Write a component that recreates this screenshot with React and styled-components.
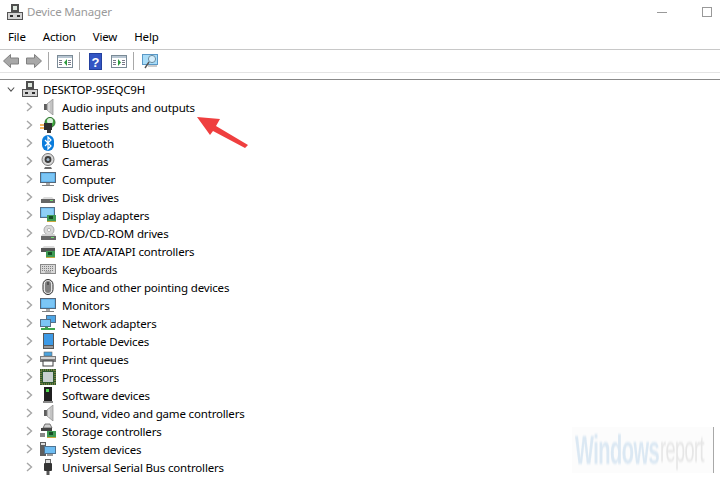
import React from 'react'
import styled, { createGlobalStyle } from 'styled-components'

const GlobalStyle = createGlobalStyle`
    html, body {
        margin: 0;
        padding: 0;
        background: #fff;
    }
    body {
        width: 720px;
        height: 480px;
        overflow: hidden;
        font-family: "Noto Sans", "Open Sans", sans-serif;
        font-size: 11.5px;
        letter-spacing: -0.17px;
        color: #000;
    }
`

const Page = styled.div`
    position: relative;
    width: 720px;
    height: 480px;
    overflow: hidden;
`

const TitleBar = styled.div`
    display: flex;
    align-items: center;
    height: 24px;
    padding-left: 7px;
    color: #9a9a9a;
`

const TitleText = styled.span`
    padding-bottom: 1px;
`

const WindowButtons = styled.div`
    margin-left: auto;
    display: flex;
    align-items: center;
    gap: 35px;
    padding-right: 8px;
`

const MinButton = styled.span`
    display: block;
    width: 10px;
    height: 1px;
    background: #999;
`

const MaxButton = styled.span`
    display: block;
    width: 8px;
    height: 8px;
    border: 1px solid #999;
`

const MenuBar = styled.div`
    display: flex;
    align-items: center;
    height: 25px;
    padding-left: 8px;
    gap: 17px;
    border-bottom: 1px solid #c8c8c8;
`

const Toolbar = styled.div`
    display: flex;
    align-items: center;
    height: 22px;
    padding-left: 3px;
    gap: 6px;
    border-bottom: 1px solid #e4e4e4;
    margin-bottom: 6px;
`

const ToolButton = styled.span`
    display: flex;
    margin-left: ${p => p.$ml || 0}px;
`

const ToolSep = styled.span`
    width: 1px;
    height: 18px;
    background: #a8a8a8;
`

const TreePanel = styled.div`
    border-top: 1px solid #8a8a8a;
`

const Row = styled.div`
    display: flex;
    align-items: center;
    height: 18px;
    padding-left: ${p => (p.$root ? 7 : 25)}px;
    white-space: nowrap;
`

const ChevronBox = styled.span`
    display: flex;
    justify-content: center;
    width: 8px;
    margin-right: 7px;
`

const IconBox = styled.span`
    display: flex;
    width: 16px;
    height: 16px;
    margin-right: ${p => p.$gap ?? 6}px;
`

const Arrow = styled.svg`
    position: absolute;
    left: 190px;
    top: 110px;
`

const Watermark = styled.div`
    position: absolute;
    left: 572px;
    top: 427px;
    width: 142px;
    height: 46px;
    display: flex;
    align-items: center;
    padding-left: 3px;
    box-sizing: border-box;
    background: #fcfcfc;
    border-right: 1px solid #a8a8a8;
    font-family: "Liberation Sans", sans-serif;
    font-size: 40px;
    line-height: 46px;
    letter-spacing: -1px;
    overflow: hidden;
`

const WmBlue = styled.span`
    display: inline-block;
    flex: none;
    width: 85px;
    color: #dbe8f3;
    font-weight: 700;
    white-space: nowrap;
    transform: scaleX(0.5);
    transform-origin: left center;
    filter: blur(1px);
`

const WmGrey = styled.span`
    display: inline-block;
    flex: none;
    width: 50px;
    color: #e6e6e6;
    font-size: 36px;
    white-space: nowrap;
    transform: scaleX(0.5);
    transform-origin: left center;
    filter: blur(1px);
`

const Svg = ({ children }) => (
    <svg width="16" height="16" viewBox="0 0 16 16">{children}</svg>
)

const ChevronRight = () => (
    <svg width="7" height="10" viewBox="0 0 7 10">
        <path d="M1 1l4.5 4-4.5 4" fill="none" stroke="#a6a6a6" strokeWidth="1.4" />
    </svg>
)

const ChevronDown = () => (
    <svg width="10" height="7" viewBox="0 0 10 7">
        <path d="M1 1l4 4.5 4-4.5" fill="none" stroke="#555" strokeWidth="1.4" />
    </svg>
)

const PcTower = () => (
    <Svg>
        <rect x="4" y="0" width="8" height="8" fill="#4f4f4f" />
        <rect x="6" y="2" width="4" height="4" fill="#dfe8df" />
        <rect x="0.5" y="8.5" width="15" height="7" fill="#d4d4d4" stroke="#555" />
        <rect x="3" y="11" width="3" height="2" fill="#2c2c2c" />
        <rect x="10" y="11" width="3" height="2" fill="#2c2c2c" />
    </Svg>
)

const Speaker = () => (
    <Svg>
        <path d="M4 5h3v6H4z" fill="#5f5f5f" />
        <path d="M7 5l6-5v16l-6-5z" fill="#c4c4c4" stroke="#8c8c8c" strokeWidth="0.7" />
        <path d="M9 4v8" stroke="#e6e6e6" strokeWidth="1.2" />
    </Svg>
)

const Monitor = () => (
    <Svg>
        <rect x="0.5" y="1.5" width="15" height="10" fill="#4ea6e6" stroke="#56687a" />
        <rect x="1.5" y="2.5" width="13" height="8" fill="#7cc6f5" />
        <rect x="6" y="12" width="4" height="2" fill="#a8a8a8" />
        <rect x="2" y="14" width="12" height="1" fill="#808080" />
    </Svg>
)

const Board = ({ x = 8, y = 9 }) => (
    <g>
        <rect x={x} y={y} width="9" height="6" fill="#3f9a54" />
        <rect x={x + 2} y={y + 1} width="4" height="3" fill="#174d25" />
        <rect x={x} y={y + 6} width="9" height="1" fill="#c9a93f" />
    </g>
)

const Batteries = () => (
    <Svg>
        <circle cx="10" cy="5.5" r="5" fill="#3da33d" stroke="#2c6f2c" />
        <circle cx="10" cy="4" r="3" fill="#d9f0d9" />
        <rect x="4" y="6" width="8" height="7" fill="#2e2e2e" />
        <path d="M0 8h4M0 11h4" stroke="#f2a12e" strokeWidth="1.4" />
        <rect x="7" y="13" width="4" height="3" fill="#3a3a3a" />
    </Svg>
)

const Bluetooth = () => (
    <Svg>
        <rect x="2" y="0" width="12" height="16" rx="6" fill="#0a7cdc" />
        <path d="M5 5l6 6-3 3V2l3 3-6 6" fill="none" stroke="#fff" strokeWidth="1.2" />
    </Svg>
)

const Camera = () => (
    <Svg>
        <circle cx="8" cy="6.5" r="6" fill="#d8d8d8" stroke="#777" />
        <circle cx="8" cy="6.5" r="3.4" fill="#3c3c3c" />
        <circle cx="8" cy="6.5" r="1.5" fill="#9db4c6" />
        <path d="M5 14h6l1 2H4z" fill="#6a6a6a" />
    </Svg>
)

const DiskDrive = () => (
    <Svg>
        <path d="M2 10l2-2h8l2 2z" fill="#dcdcdc" />
        <rect x="1" y="10" width="14" height="4" fill="#666" />
        <rect x="10" y="11" width="3" height="1" fill="#6fdc6f" />
    </Svg>
)

const DisplayAdapter = () => (
    <Svg>
        <rect x="0.5" y="0.5" width="14" height="10" fill="#5fb2ee" stroke="#55708a" />
        <rect x="1.5" y="1.5" width="12" height="8" fill="#8fd0f7" />
        <Board x={7} y={8} />
    </Svg>
)

const Dvd = () => (
    <Svg>
        <circle cx="9" cy="5" r="5" fill="#d8d8d8" stroke="#aaa" />
        <circle cx="9" cy="5" r="1.6" fill="#fff" stroke="#999" strokeWidth="0.6" />
        <path d="M1 11l1.5-2h12l1 2z" fill="#cfcfcf" />
        <rect x="1" y="11" width="15" height="4" fill="#666" />
        <rect x="11" y="12" width="3" height="1" fill="#6fdc6f" />
    </Svg>
)

const Ide = () => (
    <Svg>
        <path d="M2 5l2-2h10l1 2z" fill="#dcdcdc" />
        <rect x="1" y="5" width="14" height="4" fill="#555" />
        <Board x={6} y={8} />
    </Svg>
)

const Keyboard = () => (
    <Svg>
        <rect x="0.5" y="3.5" width="15" height="9" fill="#d8d8d8" stroke="#8a8a8a" />
        <path d="M2 5.5h12M2 7.5h12M2 9.5h12" stroke="#808080" strokeWidth="1" strokeDasharray="1 1" />
        <rect x="5" y="10.5" width="6" height="1" fill="#909090" />
    </Svg>
)

const Mouse = () => (
    <Svg>
        <rect x="3" y="0.5" width="10" height="15" rx="5" fill="#e4e4e4" stroke="#2e2e2e" />
        <rect x="5" y="2" width="6" height="12" rx="3" fill="#7f7f7f" />
        <rect x="7.5" y="3" width="1" height="3" fill="#2a2a2a" />
    </Svg>
)

const Network = () => (
    <Svg>
        <rect x="6.5" y="0.5" width="9" height="7" fill="#4ea6e6" stroke="#55708a" />
        <rect x="0.5" y="4.5" width="10" height="7" fill="#7cc6f5" stroke="#55708a" />
        <path d="M1 14h14" stroke="#3ea54e" strokeWidth="2" />
        <path d="M5 12h3v2H5z" fill="#3ea54e" />
    </Svg>
)

const Portable = () => (
    <Svg>
        <rect x="3" y="0" width="11" height="16" fill="#585858" />
        <rect x="4" y="1" width="9" height="11" fill="#3d9ae6" />
        <rect x="4" y="13" width="9" height="2" fill="#999" />
    </Svg>
)

const Printer = () => (
    <Svg>
        <rect x="4" y="1" width="8" height="4" fill="#4ba3dd" stroke="#666" strokeWidth="0.6" />
        <rect x="0" y="5" width="16" height="6" fill="#7c7c7c" />
        <rect x="1" y="6" width="14" height="2" fill="#d4d4d4" />
        <rect x="3" y="10" width="10" height="5" fill="#fff" stroke="#444" />
    </Svg>
)

const Processor = () => (
    <Svg>
        <rect x="0" y="0" width="16" height="16" fill="#2f5a2f" />
        <rect x="1" y="1" width="14" height="14" fill="none" stroke="#b8a050" strokeDasharray="1 1" />
        <rect x="3" y="3" width="10" height="10" fill="#c8d0d0" />
    </Svg>
)

const SoftwareDevice = () => (
    <Svg>
        <rect x="4" y="0" width="8" height="14" fill="#1f1f1f" />
        <rect x="6" y="2" width="3" height="3" fill="#50d850" />
        <rect x="3" y="14" width="10" height="2" fill="#8a8a8a" />
    </Svg>
)

const Storage = () => (
    <Svg>
        <path d="M3 5l2-4h5l2 4z" fill="#d0d0d0" stroke="#444" strokeWidth="0.7" />
        <rect x="1" y="5" width="11" height="3" fill="#444" />
        <path d="M0 10h5v4H0z" fill="#888" />
        <Board x={7} y={8} />
    </Svg>
)

const SystemDevice = () => (
    <Svg>
        <rect x="0" y="1" width="6" height="14" fill="#5e5e5e" />
        <rect x="1" y="2" width="4" height="2" fill="#ddd" />
        <rect x="4.5" y="5.5" width="11" height="7" fill="#6ebdf2" stroke="#4f7391" />
        <rect x="7" y="13" width="6" height="2" fill="#999" />
    </Svg>
)

const Usb = () => (
    <Svg>
        <rect x="5.5" y="0.5" width="5" height="4" fill="#ddd" stroke="#666" />
        <rect x="4" y="4" width="8" height="8" rx="1" fill="#333" />
        <rect x="6.5" y="12" width="3" height="4" fill="#555" />
    </Svg>
)

const BackArrow = ({ flip }) => (
    <svg width="16" height="16" viewBox="0 0 16 16" style={flip ? { transform: 'scaleX(-1)' } : undefined}>
        <path d="M.5 8l7-6.5V5h8v6h-8v3.5z" fill="#a8a8a8" stroke="#808080" />
    </svg>
)

const PanelIcon = ({ arrow }) => (
    <svg width="16" height="16" viewBox="0 0 16 16">
        <rect x="0.5" y="2.5" width="15" height="12" fill="#fff" stroke="#7a8a96" />
        <rect x="1" y="3" width="14" height="2" fill="#b8c6d2" />
        <rect x="2" y="7" width="3" height="1" fill="#778" />
        <rect x="2" y="9" width="3" height="1" fill="#778" />
        <rect x="2" y="11" width="3" height="1" fill="#778" />
        <rect x="11" y="7" width="3" height="1" fill="#778" />
        <rect x="11" y="9" width="3" height="1" fill="#778" />
        <rect x="11" y="11" width="3" height="1" fill="#778" />
        <path d={arrow === 'left' ? 'M10 6v7L7 9.5z' : 'M7 6v7l3-3.5z'} fill="#2d9a3f" />
    </svg>
)

const HelpIcon = () => (
    <svg width="13" height="17" viewBox="0 0 13 17">
        <rect width="13" height="17" fill="#23409e" />
        <rect x="1" y="1" width="11" height="15" fill="#3355c4" />
        <text x="6.5" y="13.5" textAnchor="middle" fontSize="13" fontWeight="700" fontFamily="Liberation Sans" fill="#fff">?</text>
    </svg>
)

const ScanIcon = () => (
    <svg width="17" height="17" viewBox="0 0 17 17">
        <rect x="0.5" y="1.5" width="15" height="10" fill="#a8dcf8" stroke="#5a98c6" />
        <circle cx="10" cy="6" r="3.6" fill="#d5eefc" stroke="#6c8ca0" />
        <path d="M7 9l-4 6" stroke="#555" strokeWidth="1.4" />
        <path d="M6 13h9" stroke="#999" />
    </svg>
)

const devices = [
    ['Audio inputs and outputs', Speaker],
    ['Batteries', Batteries],
    ['Bluetooth', Bluetooth],
    ['Cameras', Camera],
    ['Computer', Monitor],
    ['Disk drives', DiskDrive],
    ['Display adapters', DisplayAdapter],
    ['DVD/CD-ROM drives', Dvd],
    ['IDE ATA/ATAPI controllers', Ide],
    ['Keyboards', Keyboard],
    ['Mice and other pointing devices', Mouse],
    ['Monitors', Monitor],
    ['Network adapters', Network],
    ['Portable Devices', Portable],
    ['Print queues', Printer],
    ['Processors', Processor],
    ['Software devices', SoftwareDevice],
    ['Sound, video and game controllers', Speaker],
    ['Storage controllers', Storage],
    ['System devices', SystemDevice],
    ['Universal Serial Bus controllers', Usb],
]

const App = () => {
    return (
        <Page>
            <GlobalStyle />
            <TitleBar>
                <IconBox $gap={4}><PcTower /></IconBox>
                <TitleText>Device Manager</TitleText>
                <WindowButtons>
                    <MinButton />
                    <MaxButton />
                </WindowButtons>
            </TitleBar>
            <MenuBar>
                <span>File</span>
                <span>Action</span>
                <span>View</span>
                <span>Help</span>
            </MenuBar>
            <Toolbar>
                <ToolButton><BackArrow /></ToolButton>
                <ToolButton $ml={1}><BackArrow flip /></ToolButton>
                <ToolSep />
                <ToolButton $ml={2}><PanelIcon arrow="left" /></ToolButton>
                <ToolSep />
                <ToolButton $ml={3}><HelpIcon /></ToolButton>
                <ToolButton $ml={3}><PanelIcon arrow="right" /></ToolButton>
                <ToolSep />
                <ToolButton $ml={2}><ScanIcon /></ToolButton>
            </Toolbar>
            <TreePanel>
                <Row $root>
                    <ChevronBox><ChevronDown /></ChevronBox>
                    <IconBox $gap={5}><PcTower /></IconBox>
                    <span>DESKTOP-9SEQC9H</span>
                </Row>
                {devices.map(([name, Icon]) => (
                    <Row key={name}>
                        <ChevronBox><ChevronRight /></ChevronBox>
                        <IconBox><Icon /></IconBox>
                        <span>{name}</span>
                    </Row>
                ))}
            </TreePanel>
            <Arrow width="60" height="42" viewBox="0 0 60 42">
                <path d="M7 7l23 2-4 7 32 19-3 3-32-17-3 4z" fill="#ef3f3f" />
            </Arrow>
            <Watermark>
                <WmBlue>Windows</WmBlue>
                <WmGrey>report</WmGrey>
            </Watermark>
        </Page>
    )
}

export default App
